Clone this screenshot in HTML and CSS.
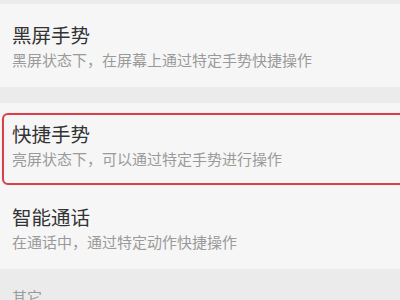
FILE: index.html
```html
<!DOCTYPE html>
<html lang="zh-CN">
<head>
    <meta charset="UTF-8">
    <meta name="viewport" content="width=device-width, initial-scale=1.0">
    <title>手势与动作</title>
    <link rel="stylesheet" href="styles.css">
</head>
<body>
    <div class="band band-top"></div>

    <div class="group">
        <div class="item">
            <div class="item-title">黑屏手势</div>
            <div class="item-desc">黑屏状态下，在屏幕上通过特定手势快捷操作</div>
        </div>
    </div>

    <div class="band"></div>

    <div class="group">
        <div class="item item-marked">
            <div class="item-title">快捷手势</div>
            <div class="item-desc">亮屏状态下，可以通过特定手势进行操作</div>
            <!-- 标注框 -->
            <div class="mark"></div>
        </div>
        <div class="item">
            <div class="item-title">智能通话</div>
            <div class="item-desc">在通话中，通过特定动作快捷操作</div>
        </div>
    </div>

    <div class="section-header">其它</div>
</body>
</html>
```

FILE: styles.css
```css
/* 基础 */
* {
    margin: 0;
    padding: 0;
    box-sizing: border-box;
}

body {
    font-family: "Noto Sans CJK SC", "Noto Sans", sans-serif;
    background-color: #ebebeb;
    overflow: hidden;
}

/* 分隔带 */
.band {
    height: 16px;
    background-color: #ebebeb;
}

.band-top {
    height: 4px;
}

/* 列表 */
.group {
    background-color: #f6f6f6;
}

.item {
    position: relative;
    height: 83px;
    padding: 19px 12px 0;
}

.item-title {
    font-size: 19.5px;
    line-height: 24px;
    color: #333;
}

.item-desc {
    margin-top: 3px;
    font-size: 15px;
    line-height: 20px;
    color: #9a9a9a;
}

/* 红色标注框 */
.mark {
    position: absolute;
    top: 10px;
    left: 2px;
    right: -10px;
    bottom: 1px;
    border: 2px solid #d8414b;
    border-radius: 6px;
    box-shadow: 0 0 1px rgba(216, 65, 75, 0.4);
}

/* 分组标题 */
.section-header {
    padding: 18px 12px 0;
    font-size: 15px;
    line-height: 20px;
    color: #9a9a9a;
}
```
